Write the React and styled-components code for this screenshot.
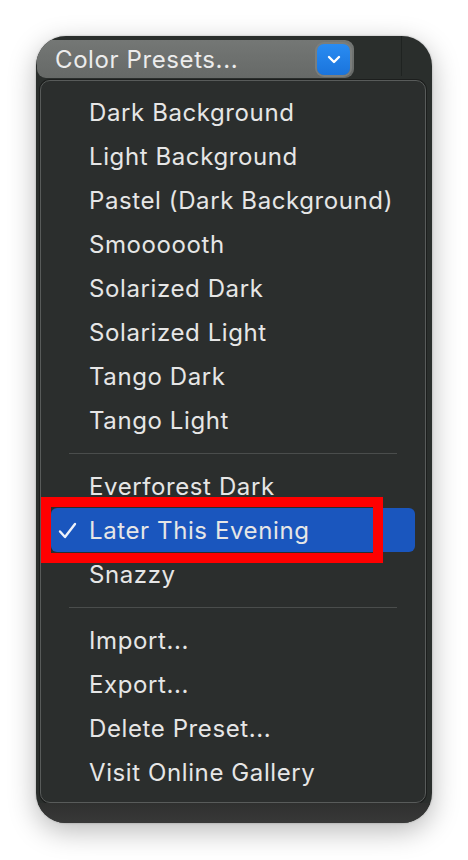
import React from 'react';
import styled, { createGlobalStyle } from 'styled-components';

const GlobalStyle = createGlobalStyle`
  html, body {
    margin: 0;
    padding: 0;
    background: #ffffff;
  }
  body {
    font-family: Inter, "Noto Sans", "Liberation Sans", sans-serif;
    -webkit-font-smoothing: antialiased;
  }
`;

const Page = styled.div`
  width: 468px;
  height: 860px;
  padding: 36px 0 0 36px;
  box-sizing: border-box;
`;

const Window = styled.div`
  width: 396px;
  height: 787px;
  border-radius: 30px;
  background: #2a2e2c;
  box-shadow: 0 8px 28px rgba(0, 0, 0, 0.28), 0 0 2px rgba(0, 0, 0, 0.3);
  overflow: hidden;
  display: flex;
  flex-direction: column;
`;

const TopBar = styled.div`
  height: 44px;
  display: flex;
  align-items: flex-start;
  padding: 4px 0 0 1px;
  box-sizing: border-box;
`;

const Popup = styled.div`
  width: 317px;
  height: 38px;
  border-radius: 10px 9px 9px 9px;
  background: linear-gradient(#747775, #666967);
  display: flex;
  align-items: center;
  justify-content: space-between;
  padding: 0 4px 0 18px;
  box-sizing: border-box;
  color: #ececec;
  font-size: 24px;
  letter-spacing: 0.6px;
`;

const Stepper = styled.div`
  width: 33px;
  height: 31px;
  border-radius: 7px;
  background: linear-gradient(#2a8cf2, #1a74dc);
  box-shadow: 0 0 0 2px #7b7e7c;
  display: flex;
  align-items: center;
  justify-content: center;
`;

const Divider = styled.div`
  margin-left: 47px;
  width: 1px;
  height: 40px;
  margin-top: -4px;
  background: #1f2321;
`;

const Menu = styled.div`
  margin: 0 6px 0 4px;
  height: 723px;
  box-sizing: border-box;
  border: 1px solid #585b5a;
  border-radius: 10px;
  background: #2b2e2d;
  box-shadow: 0 0 0 1px #1c1e1d;
  padding: 9px 0 7px;
`;

const Item = styled.div`
  position: relative;
  height: 44px;
  margin: 0 10px;
  border-radius: 6px;
  display: flex;
  align-items: center;
  padding-left: 7px;
  color: #e6e6e6;
  font-size: 24px;
  letter-spacing: 0.6px;
  background: ${(p) => (p.$selected ? '#1a56be' : 'transparent')};
`;

const Check = styled.span`
  width: 31px;
  display: flex;
  align-items: center;
`;

const Separator = styled.div`
  height: 22px;
  display: flex;
  align-items: center;
  padding: 0 28px;
  &::after {
    content: '';
    flex: 1;
    height: 1px;
    background: #4a4d4c;
  }
`;

const Highlight = styled.div`
  position: absolute;
  left: -10px;
  top: -11px;
  width: 342px;
  height: 66px;
  box-sizing: border-box;
  border: 10px solid #ff0000;
  pointer-events: none;
`;

const Bottom = styled.div`
  flex: 1;
  background: linear-gradient(#2f302f, #383838);
`;

const groups = [
  ['Dark Background', 'Light Background', 'Pastel (Dark Background)', 'Smoooooth', 'Solarized Dark', 'Solarized Light', 'Tango Dark', 'Tango Light'],
  ['Everforest Dark', 'Later This Evening', 'Snazzy'],
  ['Import...', 'Export...', 'Delete Preset...', 'Visit Online Gallery'],
];

const selected = 'Later This Evening';

const App = () => {
  return (
    <Page>
      <GlobalStyle />
      <Window>
        <TopBar>
          <Popup>
            <span>Color Presets...</span>
            <Stepper>
              <svg width="14" height="9" viewBox="0 0 14 9">
                <path d="M2 2 L7 7 L12 2" fill="none" stroke="#ffffff" strokeWidth="2.4" strokeLinecap="round" strokeLinejoin="round" />
              </svg>
            </Stepper>
          </Popup>
          <Divider />
        </TopBar>
        <Menu>
          {groups.map((group, gi) => (
            <React.Fragment key={gi}>
              {gi > 0 && <Separator />}
              {group.map((label) => (
                <Item key={label} $selected={label === selected}>
                  <Check>
                    {label === selected && (
                      <svg width="19" height="17" viewBox="0 0 19 17">
                        <path d="M2 9.5 L7 15 L17 2" fill="none" stroke="#eef2fb" strokeWidth="2.4" strokeLinecap="round" strokeLinejoin="round" />
                      </svg>
                    )}
                  </Check>
                  {label}
                  {label === selected && <Highlight />}
                </Item>
              ))}
            </React.Fragment>
          ))}
        </Menu>
        <Bottom />
      </Window>
    </Page>
  );
};

export default App;
